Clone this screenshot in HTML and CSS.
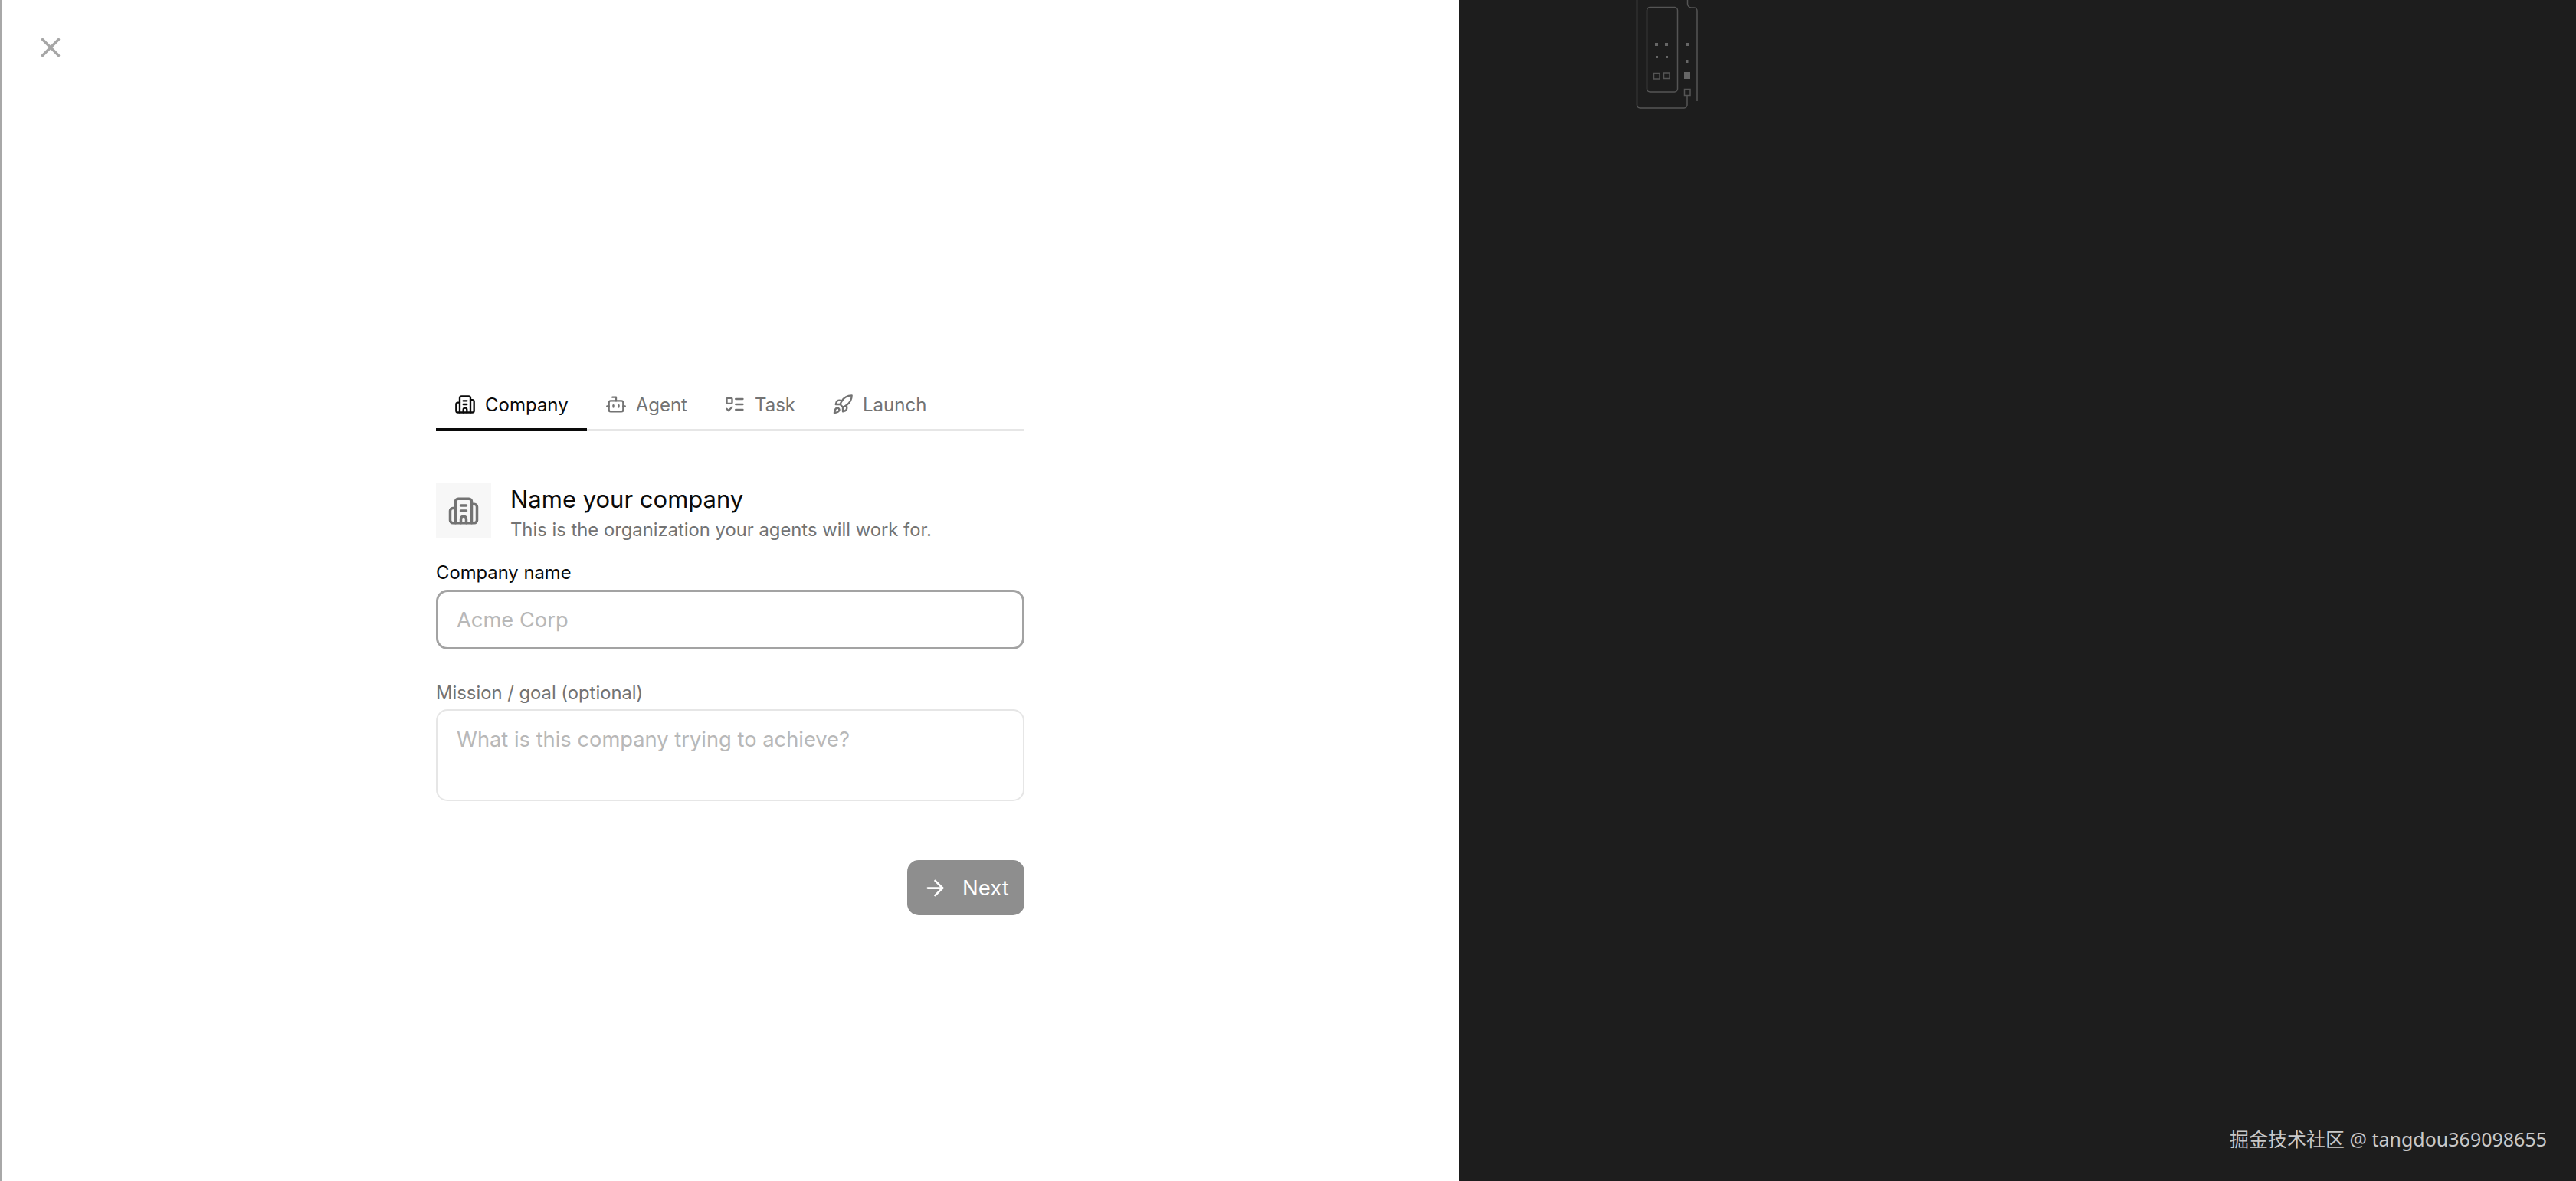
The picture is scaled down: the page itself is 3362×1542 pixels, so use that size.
FILE: index.html
```html
<!DOCTYPE html>
<html lang="en">
<head>
  <meta charset="UTF-8" />
  <title>New company</title>
  <link rel="stylesheet" href="styles.css">
</head>
<body>
  <div class="page">
    <section class="form-panel">
      <button class="close-btn" aria-label="Close">
        <svg viewBox="0 0 24 24" class="icon-close"><path d="M18 6 6 18"/><path d="m6 6 12 12"/></svg>
      </button>

      <div class="wizard">
        <nav class="tabs">
          <div class="tab active">
            <svg viewBox="0 0 24 24" class="icon"><path d="M10 12h4"/><path d="M10 8h4"/><path d="M14 21v-3a2 2 0 0 0-4 0v3"/><path d="M6 10H4a2 2 0 0 0-2 2v7a2 2 0 0 0 2 2h16a2 2 0 0 0 2-2V9a2 2 0 0 0-2-2h-2"/><path d="M6 21V5a2 2 0 0 1 2-2h8a2 2 0 0 1 2 2v16"/></svg>
            Company
          </div>
          <div class="tab">
            <svg viewBox="0 0 24 24" class="icon"><path d="M12 8V4H8"/><rect width="16" height="12" x="4" y="8" rx="2"/><path d="M2 14h2"/><path d="M20 14h2"/><path d="M15 13v2"/><path d="M9 13v2"/></svg>
            Agent
          </div>
          <div class="tab">
            <svg viewBox="0 0 24 24" class="icon"><rect x="3" y="5" width="6" height="6" rx="1"/><path d="m3 17 2 2 4-4"/><path d="M13 6h8"/><path d="M13 12h8"/><path d="M13 18h8"/></svg>
            Task
          </div>
          <div class="tab">
            <svg viewBox="0 0 24 24" class="icon"><path d="M4.5 16.5c-1.5 1.26-2 5-2 5s3.74-.5 5-2c.71-.84.7-2.13-.09-2.91a2.18 2.18 0 0 0-2.91-.09z"/><path d="m12 15-3-3a22 22 0 0 1 2-3.95A12.88 12.88 0 0 1 22 2c0 2.72-.78 7.5-6 11a22.35 22.35 0 0 1-4 2z"/><path d="M9 12H4s.55-3.03 2-4c1.62-1.08 5 0 5 0"/><path d="M12 15v5s3.03-.55 4-2c1.08-1.62 0-5 0-5"/></svg>
            Launch
          </div>
        </nav>

        <header class="step-head">
          <div class="step-icon">
            <svg viewBox="0 0 24 24" class="icon-large"><path d="M10 12h4"/><path d="M10 8h4"/><path d="M14 21v-3a2 2 0 0 0-4 0v3"/><path d="M6 10H4a2 2 0 0 0-2 2v7a2 2 0 0 0 2 2h16a2 2 0 0 0 2-2V9a2 2 0 0 0-2-2h-2"/><path d="M6 21V5a2 2 0 0 1 2-2h8a2 2 0 0 1 2 2v16"/></svg>
          </div>
          <div>
            <h1 class="step-title">Name your company</h1>
            <p class="step-sub">This is the organization your agents will work for.</p>
          </div>
        </header>

        <label class="field-label dark" for="companyName">Company name</label>
        <input class="text-input focused" id="companyName" type="text" placeholder="Acme Corp" />

        <label class="field-label" for="mission">Mission / goal (optional)</label>
        <textarea class="text-input area" id="mission" placeholder="What is this company trying to achieve?"></textarea>

        <div class="actions">
          <button class="next-btn">
            <svg viewBox="0 0 24 24" class="icon-arrow"><path d="M5 12h14"/><path d="m12 5 7 7-7 7"/></svg>
            Next
          </button>
        </div>
      </div>
    </section>

    <section class="dark-panel">
      <svg class="schematic" width="100" height="150" viewBox="0 0 100 150">
        <path d="M6.500 0V137a4 4 0 0 0 4 4H68a4 4 0 0 0 4-4V125"/>
        <path d="M72.500 0V5a5 5 0 0 0 5 5H81a4 4 0 0 1 4 4V132"/>
        <rect x="19.500" y="9.500" width="40" height="110.500" rx="4"/>
        <rect x="68.500" y="116.500" width="7.500" height="8" />
        <rect x="28.500" y="95.500" width="7.500" height="7.500"/>
        <rect x="41.500" y="95" width="7.500" height="7.500"/>
        <g class="dots">
          <rect x="30" y="56" width="4" height="4"/>
          <rect x="43" y="56" width="4" height="4"/>
          <rect x="70" y="56" width="4" height="4"/>
          <rect x="31" y="73" width="3" height="3"/>
          <rect x="44" y="73" width="3" height="3"/>
          <rect x="70.500" y="78" width="3" height="4"/>
          <rect x="68" y="94" width="8" height="9"/>
        </g>
      </svg>
      <div class="watermark">掘金技术社区 @ tangdou369098655</div>
    </section>
  </div>
</body>
</html>
```

FILE: styles.css
```css
* {
  box-sizing: border-box;
}
body {
  margin: 0;
  font-family: 'Inter', sans-serif;
  background: #fff;
  overflow: hidden;
}
.page {
  display: flex;
  height: 1542px;
}

/* left side */
.form-panel {
  position: relative;
  width: 1904px;
  padding: 497px 0 0 567px;
  background: #fff;
  border-left: 2px solid #a8a8a8;
}
.close-btn {
  position: absolute;
  top: 41px;
  left: 43px;
  width: 42px;
  height: 42px;
  padding: 0;
  border: none;
  background: none;
}
.icon-close {
  display: block;
  width: 42px;
  height: 42px;
  fill: none;
  stroke: #a6a6a6;
  stroke-width: 2;
  stroke-linecap: round;
}
.wizard {
  width: 768px;
}

.tabs {
  display: flex;
  border-bottom: 3px solid #e6e6e6;
  height: 66px;
}
.tab {
  display: flex;
  align-items: center;
  gap: 12px;
  height: 66px;
  padding: 0 24px;
  font-size: 24px;
  font-weight: 400;
  color: #737373;
  border-bottom: 4px solid transparent;
}
.tab.active {
  color: #0a0a0a;
  border-bottom-color: #0a0a0a;
}
.icon {
  width: 28px;
  height: 28px;
  flex: none;
  fill: none;
  stroke: currentColor;
  stroke-width: 2;
  stroke-linecap: round;
  stroke-linejoin: round;
}

.step-head {
  display: flex;
  gap: 25px;
  margin-top: 68px;
  height: 72px;
}
.step-icon {
  display: flex;
  align-items: center;
  justify-content: center;
  width: 72px;
  height: 72px;
  background: #f7f7f7;
  flex: none;
}
.icon-large {
  width: 42px;
  height: 42px;
  fill: none;
  stroke: #737373;
  stroke-width: 2;
  stroke-linecap: round;
  stroke-linejoin: round;
}
.step-title {
  margin: 1px 0 0;
  font-size: 31px;
  line-height: 40px;
  font-weight: 400;
  color: #0a0a0a;
}
.step-sub {
  margin: 5px 0 0;
  font-size: 23.800px;
  line-height: 30px;
  color: #737373;
}

.field-label {
  display: block;
  font-size: 23.800px;
  line-height: 30px;
  color: #737373;
}
.field-label.dark {
  margin-top: 30px;
  color: #0a0a0a;
}
.text-input {
  display: block;
  width: 100%;
  height: 78px;
  margin-top: 7px;
  padding: 0 25px;
  font-family: 'Inter', sans-serif;
  font-size: 27.300px;
  color: #0a0a0a;
  background: #fff;
  border: 2px solid #e6e6e6;
  border-radius: 15px;
  outline: none;
  resize: none;
}
.text-input::placeholder {
  color: #b8b8b8;
  opacity: 1;
}
.text-input.focused {
  padding: 0 24px;
  border: 3px solid #a3a3a3;
  margin-bottom: 42px;
}
.text-input.area {
  height: 120px;
  margin-top: 6px;
  padding-top: 21px;
  line-height: 34px;
}

.actions {
  display: flex;
  justify-content: flex-end;
  margin-top: 77px;
}
.next-btn {
  display: flex;
  align-items: center;
  gap: 19px;
  width: 153px;
  height: 72px;
  padding: 0 0 0 20px;
  font-family: 'Inter', sans-serif;
  font-size: 27.500px;
  font-weight: 400;
  color: #fff;
  background: #8e8e8e;
  border: none;
  border-radius: 15px;
}
.icon-arrow {
  width: 33px;
  height: 33px;
  flex: none;
  fill: none;
  stroke: #fff;
  stroke-width: 2;
  stroke-linecap: round;
  stroke-linejoin: round;
}

/* right side */
.dark-panel {
  position: relative;
  flex: 1;
  padding-left: 226px;
  background: #1d1d1d;
}
.schematic {
  display: block;
  fill: none;
  stroke: #555;
  stroke-width: 1.500;
}
.dots rect {
  fill: #666;
  stroke: none;
}
.watermark {
  position: absolute;
  right: 38px;
  bottom: 37px;
  font-family: 'Noto Sans', 'Noto Sans CJK SC', sans-serif;
  font-size: 25px;
  line-height: 36px;
  color: #c8c8c8;
}
```
